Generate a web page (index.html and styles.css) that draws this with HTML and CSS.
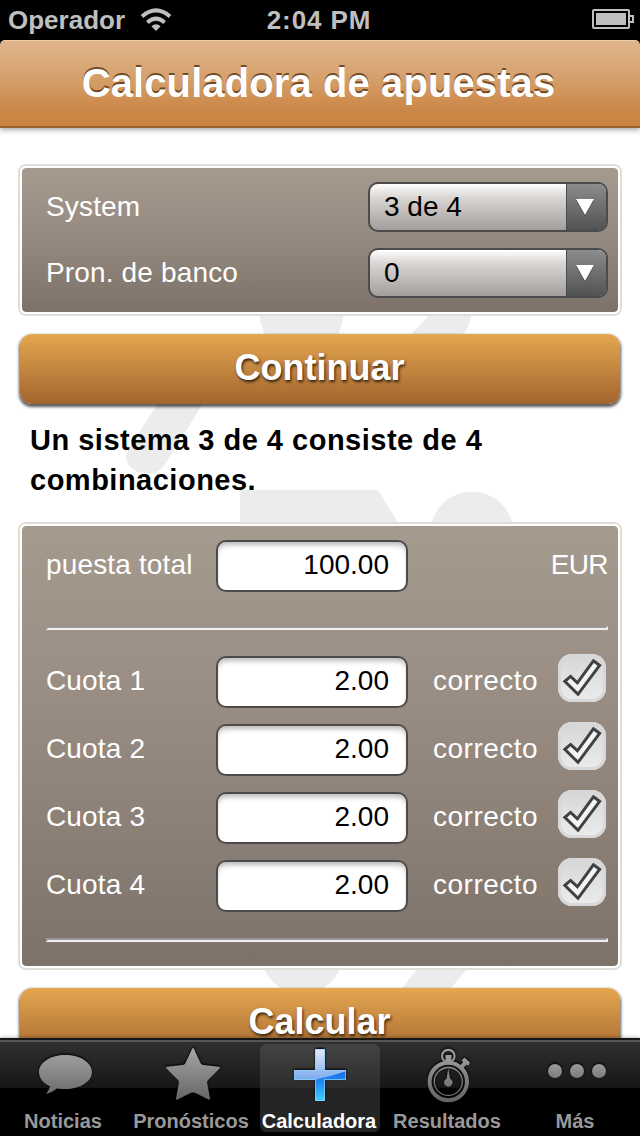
FILE: index.html
```html
<!DOCTYPE html>
<html lang="es">
  <head>
    <meta charset="UTF-8" />
    <meta name="viewport" content="width=device-width, initial-scale=1.0" />
    <title>Calculadora de apuestas</title>
    <link rel="stylesheet" href="styles.css">
  </head>
  <body>
    <div class="statusbar">
      <div class="statusbar__left">
        <span>Operador</span>
        <svg class="wifi" width="32" height="24" viewBox="0 0 32 24">
          <path d="M2 8.4Q16 -3.6 30 8.4" />
          <path d="M7.4 14.4Q16 7 24.6 14.4" />
          <path class="wifi__dot" d="M11.4 18.3Q16 14 20.6 18.3L16 23Z" />
        </svg>
      </div>
      <span class="statusbar__time">2:04 PM</span>
      <svg class="battery" width="42" height="20" viewBox="0 0 42 20">
        <rect class="battery__case" x="1" y="1" width="36" height="18" rx="1" />
        <rect class="battery__level" x="4" y="4" width="30" height="12" />
        <path class="battery__case" d="M38 7H41V13H38" />
      </svg>
    </div>

    <header class="header">
      <h1 class="header__title">Calculadora de apuestas</h1>
    </header>

    <main class="content">
      <svg class="watermark" width="640" height="910" viewBox="0 128 640 910">
        <circle cx="301.500" cy="315" r="41.500" />
        <path d="M440 300Q474 300 471 316Q469 328 463 334L400 400H350L430 314Z" />
        <path d="M160 400H205L164 466Q154 477 138 472Q122 464 128 450Z" />
        <path d="M240 490H378L400 526H240Z" />
        <circle cx="472" cy="533" r="41.500" />
        <circle cx="302" cy="953" r="41" />
        <path d="M426 958H476L436 1006H388Z" />
      </svg>

      <section class="panel panel--system">
        <div class="field">
          <span class="label">System</span>
          <div class="select">
            <span class="select__value">3 de 4</span>
            <span class="select__arrow"><svg width="18" height="17" viewBox="0 0 18 17"><path d="M0 1H18L9 17Z" /></svg></span>
          </div>
        </div>
        <div class="field">
          <span class="label">Pron. de banco</span>
          <div class="select">
            <span class="select__value">0</span>
            <span class="select__arrow"><svg width="18" height="17" viewBox="0 0 18 17"><path d="M0 1H18L9 17Z" /></svg></span>
          </div>
        </div>
      </section>

      <button class="btn">Continuar</button>

      <p class="info">Un sistema 3 de 4 consiste de 4 combinaciones.</p>

      <section class="panel panel--odds">
        <div class="row">
          <span class="label">puesta total</span>
          <input class="input" type="text" value="100.00" />
          <span class="label row__currency">EUR</span>
        </div>
        <hr class="rule" />
        <div class="odds">
          <div class="row">
            <span class="label">Cuota 1</span>
            <input class="input" type="text" value="2.00" />
            <span class="label row__correct">correcto</span>
            <span class="check"><svg width="48" height="48" viewBox="0 0 48 48"><path d="M35.400 6.800L41.600 11.400L20 40.300L6.800 27.400L12.600 22.400L19.400 28.800Z" /></svg></span>
          </div>
          <div class="row">
            <span class="label">Cuota 2</span>
            <input class="input" type="text" value="2.00" />
            <span class="label row__correct">correcto</span>
            <span class="check"><svg width="48" height="48" viewBox="0 0 48 48"><path d="M35.400 6.800L41.600 11.400L20 40.300L6.800 27.400L12.600 22.400L19.400 28.800Z" /></svg></span>
          </div>
          <div class="row">
            <span class="label">Cuota 3</span>
            <input class="input" type="text" value="2.00" />
            <span class="label row__correct">correcto</span>
            <span class="check"><svg width="48" height="48" viewBox="0 0 48 48"><path d="M35.400 6.800L41.600 11.400L20 40.300L6.800 27.400L12.600 22.400L19.400 28.800Z" /></svg></span>
          </div>
          <div class="row">
            <span class="label">Cuota 4</span>
            <input class="input" type="text" value="2.00" />
            <span class="label row__correct">correcto</span>
            <span class="check"><svg width="48" height="48" viewBox="0 0 48 48"><path d="M35.400 6.800L41.600 11.400L20 40.300L6.800 27.400L12.600 22.400L19.400 28.800Z" /></svg></span>
          </div>
        </div>
        <hr class="rule" />
      </section>

      <button class="btn">Calcular</button>
    </main>

    <nav class="tabbar">
      <a class="tab">
        <svg class="tab__icon" width="64" height="60" viewBox="0 0 64 60">
          <defs>
            <linearGradient id="grey" gradientUnits="userSpaceOnUse" x1="0" y1="4" x2="0" y2="58">
              <stop offset="0" stop-color="#a6a6a6" />
              <stop offset="1" stop-color="#636363" />
            </linearGradient>
          </defs>
          <path fill="url(#grey)" d="M33.300 11C48 11 60 18.500 60 28S48 45 33.300 45Q29 45 25 44.400Q20 48.500 14 50Q17 46.500 18 42.300C11 39.200 7 34 7 28C7 18.500 18.600 11 33.300 11Z" />
        </svg>
        <span class="tab__label">Noticias</span>
      </a>
      <a class="tab">
        <svg class="tab__icon" width="64" height="60" viewBox="0 0 64 60">
          <path fill="url(#grey)" d="M33 4Q33.600 4 34 5L40.500 19Q41.500 21 43.500 21L59 22.800Q61 23.300 59 25L48 36Q46.800 37.500 47.200 39L50 54.500Q50 56.500 48 55.300L35 48.800Q33 48 31 48.800L18 55.300Q16 56.500 16 54.500L18.800 39Q19.200 37.500 18 36L7 25Q5 23.300 7 22.800L22.500 21Q24.500 21 25.500 19L32 5Q32.400 4 33 4Z" />
        </svg>
        <span class="tab__label">Pronósticos</span>
      </a>
      <a class="tab tab--active">
        <svg class="tab__icon" width="64" height="60" viewBox="0 0 64 60">
          <defs>
            <linearGradient id="plusTop" gradientUnits="userSpaceOnUse" x1="0" y1="5" x2="0" y2="36">
              <stop offset="0" stop-color="#e2eafa" />
              <stop offset="1" stop-color="#78aaeb" />
            </linearGradient>
            <linearGradient id="plusBottom" gradientUnits="userSpaceOnUse" x1="0" y1="26" x2="0" y2="57">
              <stop offset="0" stop-color="#1768e6" />
              <stop offset="0.5" stop-color="#2496f5" />
              <stop offset="1" stop-color="#44d0ff" />
            </linearGradient>
            <clipPath id="plusShape">
              <path d="M27 5H37V26H58V36H37V57H27V36H6V26H27Z" />
            </clipPath>
          </defs>
          <g clip-path="url(#plusShape)">
            <rect width="64" height="60" fill="url(#plusBottom)" />
            <path fill="url(#plusTop)" d="M0 0H64V25Q48 31 28 35.500Q14 38 0 38Z" />
            <path fill="none" stroke="#8fd0ff" stroke-opacity="0.700" stroke-width="2" d="M27 5H37V26H58V36H37V57H27V36H6V26H27Z" />
          </g>
        </svg>
        <span class="tab__label">Calculadora</span>
      </a>
      <a class="tab">
        <svg class="tab__icon" width="64" height="60" viewBox="0 0 64 60">
          <g fill="none" stroke="url(#grey)">
            <circle cx="32.300" cy="37.500" r="18.700" stroke-width="4" />
            <circle cx="32.300" cy="37.500" r="14" stroke-width="1.300" />
            <circle cx="32.300" cy="12" r="6.300" stroke-width="2" />
          </g>
          <path fill="url(#grey)" d="M29.500 11H35.500V18H29.500ZM32.300 24.500L34 34.500A4.300 4.300 0 1 1 30.600 34.500ZM48.500 13.500L54 18.600L52.600 21.500L50.400 20.800L46.500 25L43.500 22.400L47 18L45.700 16.200Z" />
        </svg>
        <span class="tab__label">Resultados</span>
      </a>
      <a class="tab">
        <svg class="tab__icon" width="64" height="60" viewBox="0 0 64 60">
          <defs>
            <linearGradient id="dots" x1="0" y1="0" x2="0" y2="1">
              <stop offset="0" stop-color="#9a9a9a" />
              <stop offset="1" stop-color="#7c7c7c" />
            </linearGradient>
          </defs>
          <g fill="url(#dots)">
            <circle cx="11" cy="27" r="7" />
            <circle cx="33" cy="27" r="7" />
            <circle cx="55" cy="27" r="7" />
          </g>
        </svg>
        <span class="tab__label">Más</span>
      </a>
    </nav>
  </body>
</html>
```
FILE: styles.css
```css
* {
  box-sizing: border-box;
}
body {
  margin: 0;
  width: 640px;
  height: 1136px;
  display: flex;
  flex-direction: column;
  overflow: hidden;
  background: #000;
  font-family: "Liberation Sans", Arial, sans-serif;
}

/* status bar */
.statusbar {
  height: 40px;
  flex: none;
  display: grid;
  grid-template-columns: 1fr auto 1fr;
  align-items: center;
  padding: 0 6px 0 8px;
  color: #bfbfbf;
  font-size: 26px;
  font-weight: bold;
  line-height: 40px;
}
.statusbar__left {
  display: flex;
  align-items: center;
  gap: 15px;
}
.statusbar__time {
  margin-right: 4px;
  letter-spacing: 0.9px;
}
.battery {
  justify-self: end;
  margin-bottom: 2px;
}
.wifi {
  fill: none;
  stroke: #bfbfbf;
  stroke-width: 4;
}
.wifi__dot {
  fill: #bfbfbf;
  stroke: none;
}
.battery__case {
  fill: none;
  stroke: #bfbfbf;
  stroke-width: 2;
}
.battery__level {
  fill: #bfbfbf;
}

/* header */
.header {
  position: relative;
  z-index: 1;
  height: 88px;
  flex: none;
  border-top: 1px solid #edc9a4;
  border-bottom: 2px solid #99622f;
  border-radius: 5px 5px 0 0;
  background: linear-gradient(#e0b48c, #d9a878 30%, #cc8848 80%, #ca8441);
  box-shadow: 0 2px 5px rgba(0, 0, 0, 0.35);
}
.header__title {
  margin: 0;
  padding-right: 3px;
  color: #fff;
  font-size: 40px;
  line-height: 84px;
  text-align: center;
  letter-spacing: 0.1px;
  text-shadow: 0 -2px 0 rgba(80, 45, 15, 0.75);
}

/* content */
.content {
  position: relative;
  flex: 1;
  min-height: 0;
  overflow: hidden;
  display: flex;
  flex-direction: column;
  padding: 38px 20px 0;
  background: #fff;
}
.content > * {
  flex: none;
}
.watermark {
  position: absolute;
  left: 0;
  top: 0;
  fill: #ececec;
}
.panel {
  position: relative;
  border: 2px solid #fff;
  border-radius: 6px;
  background: linear-gradient(#a59a8e, #9b8f85 35%, #7d7269) padding-box;
  box-shadow: 0 0 0 2px #e2dcd7;
}
.panel--system {
  display: flex;
  flex-direction: column;
  gap: 16px;
  padding: 14px 10px 14px 24px;
}
.panel--odds {
  padding: 14px 10px 24px 24px;
}
.label {
  color: #fff;
  font-size: 28px;
  letter-spacing: 0.15px;
}
.field {
  display: flex;
  align-items: center;
  justify-content: space-between;
}
.select {
  width: 240px;
  height: 50px;
  display: flex;
  overflow: hidden;
  border: 2px solid #4b4b4d;
  border-radius: 10px;
  background: linear-gradient(#fff, #d8d5d3 30%, #a39e9b);
}
.select__value {
  flex: 1;
  padding-left: 14px;
  font-size: 28px;
  line-height: 46px;
}
.select__arrow {
  width: 40px;
  display: flex;
  align-items: center;
  justify-content: center;
  padding: 0 3px 2px 0;
  border-left: 1px solid #4b4b4d;
  background: linear-gradient(#8c8c8c, #525252);
}
.select__arrow svg {
  fill: #fff;
  filter: drop-shadow(0 1px 0 #333);
}

.btn {
  position: relative;
  height: 70px;
  margin: 20px 0 0;
  padding: 0 1px 3px 0;
  border: none;
  border-radius: 12px;
  background: linear-gradient(#e5a750, #a3642e);
  box-shadow: 0 2px 3px 1px rgba(0, 0, 0, 0.65);
  color: #fff;
  font-family: inherit;
  font-size: 36px;
  font-weight: bold;
  text-shadow: 1px 2px 3px rgba(0, 0, 0, 0.75);
}
.info {
  position: relative;
  margin: 16px 100px 24px 10px;
  font-size: 29px;
  font-weight: bold;
  line-height: 40px;
  letter-spacing: 0.5px;
}

.row {
  display: grid;
  grid-template-columns: 170px 192px 1fr 50px;
  grid-template-rows: 52px;
  align-items: center;
}
.row .label {
  margin-bottom: 2px;
}
.row .row__currency {
  grid-column: 3 / 5;
  justify-self: end;
  letter-spacing: -0.6px;
}
.row .row__correct {
  padding-left: 25px;
  letter-spacing: 0.5px;
}
.input {
  width: 192px;
  height: 52px;
  padding: 0 17px 2px;
  border: 2px solid #4b4b4d;
  border-radius: 10px;
  background: #fff;
  box-shadow: inset 0 5px 5px -2px rgba(0, 0, 0, 0.28);
  font-family: inherit;
  font-size: 28px;
  text-align: right;
}
.rule {
  height: 4px;
  margin: 34px 0 26px;
  border: 2px solid;
  border-color: #98989b #f1f0ee #f1f0ee #98989b;
}
.odds + .rule {
  margin: 26px 0 0;
}
.odds {
  display: flex;
  flex-direction: column;
  gap: 16px;
}
.check {
  width: 48px;
  height: 48px;
  margin-bottom: 8px;
  border-radius: 14px;
  background: linear-gradient(#d6d6d6, #ececec);
  box-shadow: inset 0 0 0 3px #d8d8da;
}
.check path {
  fill: #f4f4f4;
  stroke: #414141;
  stroke-width: 3;
}

/* tab bar */
.tabbar {
  position: relative;
  height: 98px;
  flex: none;
  display: grid;
  grid-template-columns: repeat(5, 1fr);
  border-top: 2px solid #161616;
  background: linear-gradient(#555 2px, #303030 2px, #161616 48px, #000 48px);
  box-shadow: 0 0 4px rgba(0, 0, 0, 0.4);
}
.tab {
  height: 88px;
  margin: 4px;
  border-radius: 6px;
  display: flex;
  flex-direction: column;
  align-items: center;
  color: #999;
}
.tab--active {
  background: linear-gradient(#444 0, #2c2c2c 44px, #252525 44px);
  color: #fff;
}
.tab__icon {
  flex: none;
  filter: drop-shadow(0 -1px 1px #000);
}
.tab__label {
  margin: 5px -4px 0;
  padding-right: 2px;
  font-size: 20px;
  font-weight: bold;
  line-height: 24px;
}
```
